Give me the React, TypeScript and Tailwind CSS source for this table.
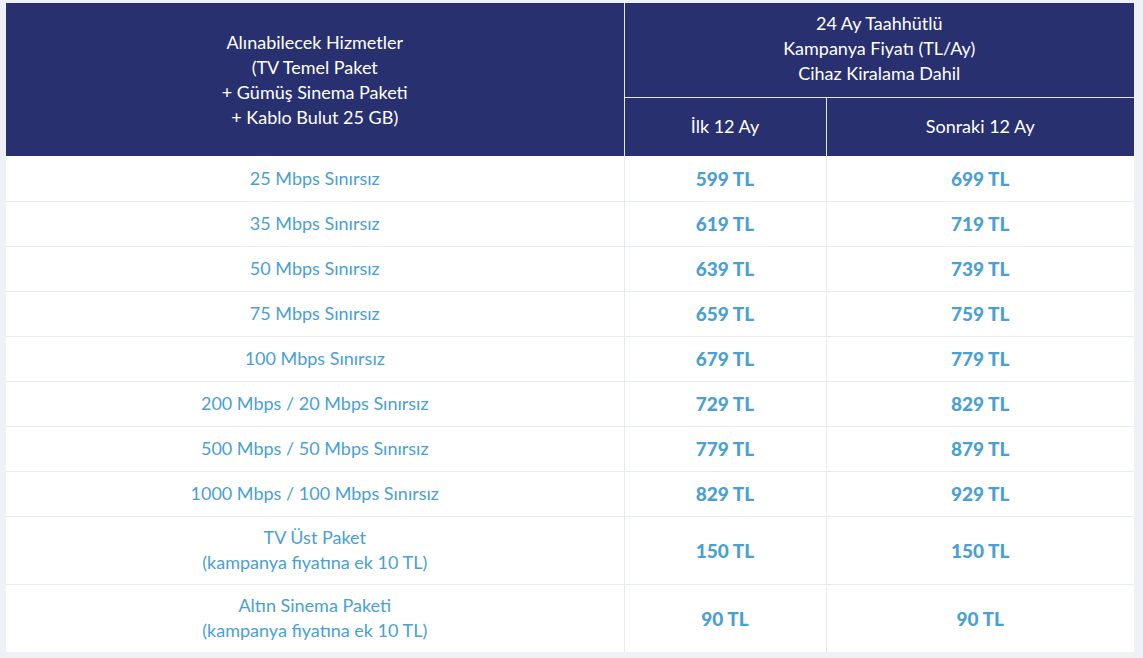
const rows: [string[], string, string][] = [
  [["25 Mbps Sınırsız"], "599 TL", "699 TL"],
  [["35 Mbps Sınırsız"], "619 TL", "719 TL"],
  [["50 Mbps Sınırsız"], "639 TL", "739 TL"],
  [["75 Mbps Sınırsız"], "659 TL", "759 TL"],
  [["100 Mbps Sınırsız"], "679 TL", "779 TL"],
  [["200 Mbps / 20 Mbps Sınırsız"], "729 TL", "829 TL"],
  [["500 Mbps / 50 Mbps Sınırsız"], "779 TL", "879 TL"],
  [["1000 Mbps / 100 Mbps Sınırsız"], "829 TL", "929 TL"],
  [["TV Üst Paket", "(kampanya fiyatına ek 10 TL)"], "150 TL", "150 TL"],
  [["Altın Sinema Paketi", "(kampanya fiyatına ek 10 TL)"], "90 TL", "90 TL"],
];

export default function App() {
  return (
    <div className="min-h-screen w-full bg-[#eef1f5] pt-[3px] pl-[6px] font-['Lato',sans-serif]">
      <table className="w-[1128px] border-collapse bg-white text-[18px] leading-[25px] text-center">
        <colgroup>
          <col className="w-[618px]" />
          <col className="w-[202px]" />
          <col className="w-[308px]" />
        </colgroup>
        <thead className="bg-[#283070] text-white">
          <tr className="h-[94px]">
            <th rowSpan={2} className="font-normal border-r border-[#e3e7ef]">
              Alınabilecek Hizmetler
              <br />
              (TV Temel Paket
              <br />+ Gümüş Sinema Paketi
              <br />+ Kablo Bulut 25 GB)
            </th>
            <th colSpan={2} className="font-normal border-b border-[#e3e7ef] pb-[2px]">
              24 Ay Taahhütlü
              <br />
              Kampanya Fiyatı (TL/Ay)
              <br />
              Cihaz Kiralama Dahil
            </th>
          </tr>
          <tr className="h-[59px]">
            <th className="font-normal border-r border-[#e3e7ef]">İlk 12 Ay</th>
            <th className="font-normal">Sonraki 12 Ay</th>
          </tr>
        </thead>
        <tbody className="text-[#4a9fd3]">
          {rows.map(([label, first, next], i) => (
            <tr
              key={i}
              className={`${label.length > 1 ? "h-[68px]" : "h-[45px]"} ${i > 0 ? "border-t border-[#e6ebf1]" : ""}`}
            >
              <td className="border-r border-[#e6ebf1]">
                {label.map((l, j) => (
                  <div key={j}>{l}</div>
                ))}
              </td>
              <td className="border-r border-[#e6ebf1] font-black text-[19px]">{first}</td>
              <td className="font-black text-[19px]">{next}</td>
            </tr>
          ))}
        </tbody>
      </table>
    </div>
  );
}
